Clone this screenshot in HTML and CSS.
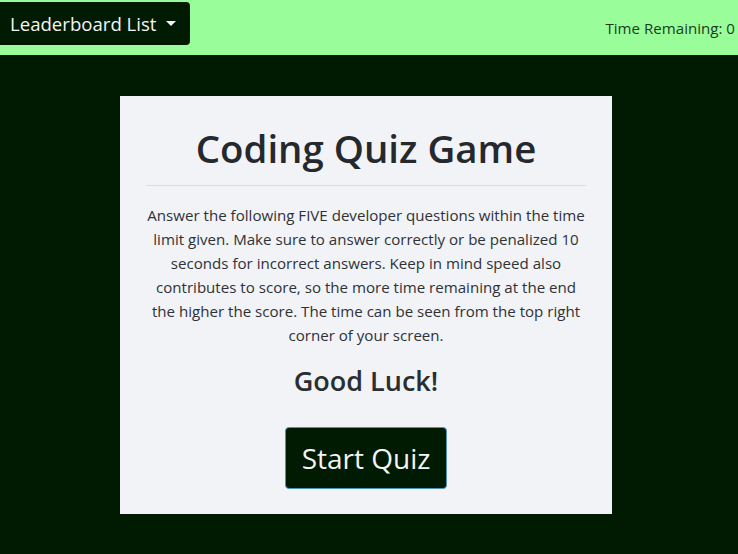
FILE: index.html
```html
<!DOCTYPE html>
<html lang="en">
<head>
<meta charset="utf-8">
<title>Coding Quiz Game</title>
<link rel="stylesheet" href="styles.css">
</head>
<body>
<header class="topbar">
  <button class="leader-btn" type="button">Leaderboard List <span class="caret"></span></button>
  <div class="timer">Time Remaining: <span>0</span></div>
</header>
<main class="stage">
  <section class="card">
    <h1 class="title">Coding Quiz Game</h1>
    <hr class="divider">
    <p class="intro">Answer the following FIVE developer questions within the time limit given. Make sure to answer correctly or be penalized 10 seconds for incorrect answers. Keep in mind speed also contributes to score, so the more time remaining at the end the higher the score. The time can be seen from the top right corner of your screen.</p>
    <h2 class="luck">Good Luck!</h2>
    <button class="start-btn" type="button">Start Quiz</button>
  </section>
</main>
</body>
</html>
```
FILE: styles.css
```css
* { box-sizing: border-box; }
html, body { margin: 0; padding: 0; }
body {
  background: #011a02;
  font-family: "Open Sans", "Noto Sans", sans-serif;
  color: #212529;
  height: 554px;
  overflow: hidden;
}
.topbar {
  height: 55px;
  background: #99fd99;
  display: flex;
  justify-content: space-between;
  align-items: flex-start;
}
.leader-btn {
  margin-top: 2px;
  height: 43px;
  width: 190px;
  padding: 0 0 0 10px;
  text-align: left;
  background: #011a02;
  color: #f4f4f4;
  border: none;
  border-radius: 0 4px 4px 0;
  font-family: inherit;
  font-size: 18.6px;
  display: flex;
  align-items: center;
  gap: 8px;
}
.caret {
  display: inline-block;
  width: 0; height: 0;
  border-left: 5px solid transparent;
  border-right: 5px solid transparent;
  border-top: 5px solid #f4f4f4;
  margin-left: 2px;
}
.timer {
  align-self: center;
  padding-right: 3px;
  font-size: 15.1px;
  color: #1d3a1f;
}
.stage {
  display: flex;
  justify-content: center;
  padding: 41px 6px 0 0;
}
.card {
  width: 492px;
  height: 418px;
  background: #f1f3f7;
  padding: 29px 26px 0;
  text-align: center;
}
.title {
  margin: 0;
  font-size: 38.4px;
  font-weight: 600;
  line-height: 46px;
  color: #25282c;
}
.divider {
  margin: 14px 0 17px;
  border: 0;
  border-top: 1px solid #d9dbde;
}
.intro {
  margin: 0 -3px;
  font-size: 15.1px;
  line-height: 24px;
  color: #2e3136;
}
.luck {
  margin: 17px 0 30px;
  font-size: 27px;
  font-weight: 600;
  line-height: 33px;
  color: #2a2d31;
}
.start-btn {
  height: 62px;
  padding: 0 16px;
  background: #011a02;
  color: #f4f4f4;
  border: 1px solid #4f8fc0;
  border-radius: 4px;
  font-family: inherit;
  font-size: 28px;
}
```
